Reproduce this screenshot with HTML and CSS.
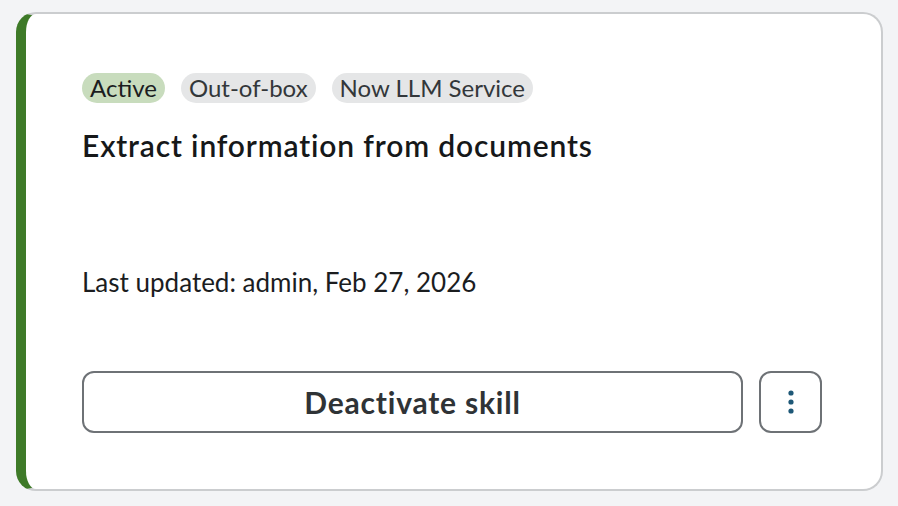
FILE: index.html
```html
<!DOCTYPE html>
<html lang="en">
<head>
<meta charset="utf-8">
<link rel="stylesheet" href="styles.css">
</head>
<body>
<div class="card">
  <div class="badges">
    <span class="badge badge-active">Active</span>
    <span class="badge">Out-of-box</span>
    <span class="badge">Now LLM Service</span>
  </div>
  <h2 class="title">Extract information from documents</h2>
  <p class="meta">Last updated: admin, Feb 27, 2026</p>
  <div class="actions">
    <button class="btn-main">Deactivate skill</button>
    <button class="btn-more" aria-label="More actions">
      <svg width="8" height="26" viewBox="0 0 8 26"><circle cx="4" cy="4" r="2.6" fill="#1e5877"/><circle cx="4" cy="13" r="2.6" fill="#1e5877"/><circle cx="4" cy="22" r="2.6" fill="#1e5877"/></svg>
    </button>
  </div>
</div>
</body>
</html>
```
FILE: styles.css
```css
html, body {
  margin: 0;
  padding: 0;
  background: #f3f4f6;
}
body {
  padding: 12px 16px;
  font-family: Lato, "Noto Sans", sans-serif;
  color: #1b1d1f;
}
.card {
  box-sizing: border-box;
  width: 867px;
  height: 479px;
  background: #fff;
  border: 2px solid #cbcdcf;
  border-left: 10px solid #3e7a28;
  border-radius: 20px;
  padding: 59px 59px 0 56px;
  display: flex;
  flex-direction: column;
}
.badges {
  display: flex;
  gap: 16px;
}
.badge {
  background: #e5e6e7;
  color: #33373a;
  border-radius: 16px;
  font-size: 24px;
  line-height: 30px;
  padding: 0 8px;
}
.badge-active {
  background: #c8dcbd;
  color: #1b1d1f;
}
.title {
  margin: 24px 0 0;
  font-size: 30px;
  line-height: 36px;
  font-weight: 600;
  letter-spacing: 0.85px;
  color: #161819;
}
.meta {
  margin: 103px 0 0;
  font-size: 26px;
  line-height: 32px;
  color: #1b1d1f;
}
.actions {
  display: flex;
  gap: 16px;
  margin-top: 73px;
}
.btn-main {
  flex: 1;
  height: 62px;
  border: 2px solid #6e7276;
  border-radius: 12px;
  background: #fff;
  font-family: Lato, "Noto Sans", sans-serif;
  font-size: 30px;
  font-weight: 700;
  letter-spacing: 0.8px;
  color: #2f3336;
}
.btn-more {
  width: 63px;
  height: 62px;
  border: 2px solid #6e7276;
  border-radius: 12px;
  background: #fff;
  display: flex;
  align-items: center;
  justify-content: center;
  padding: 0;
}
```
